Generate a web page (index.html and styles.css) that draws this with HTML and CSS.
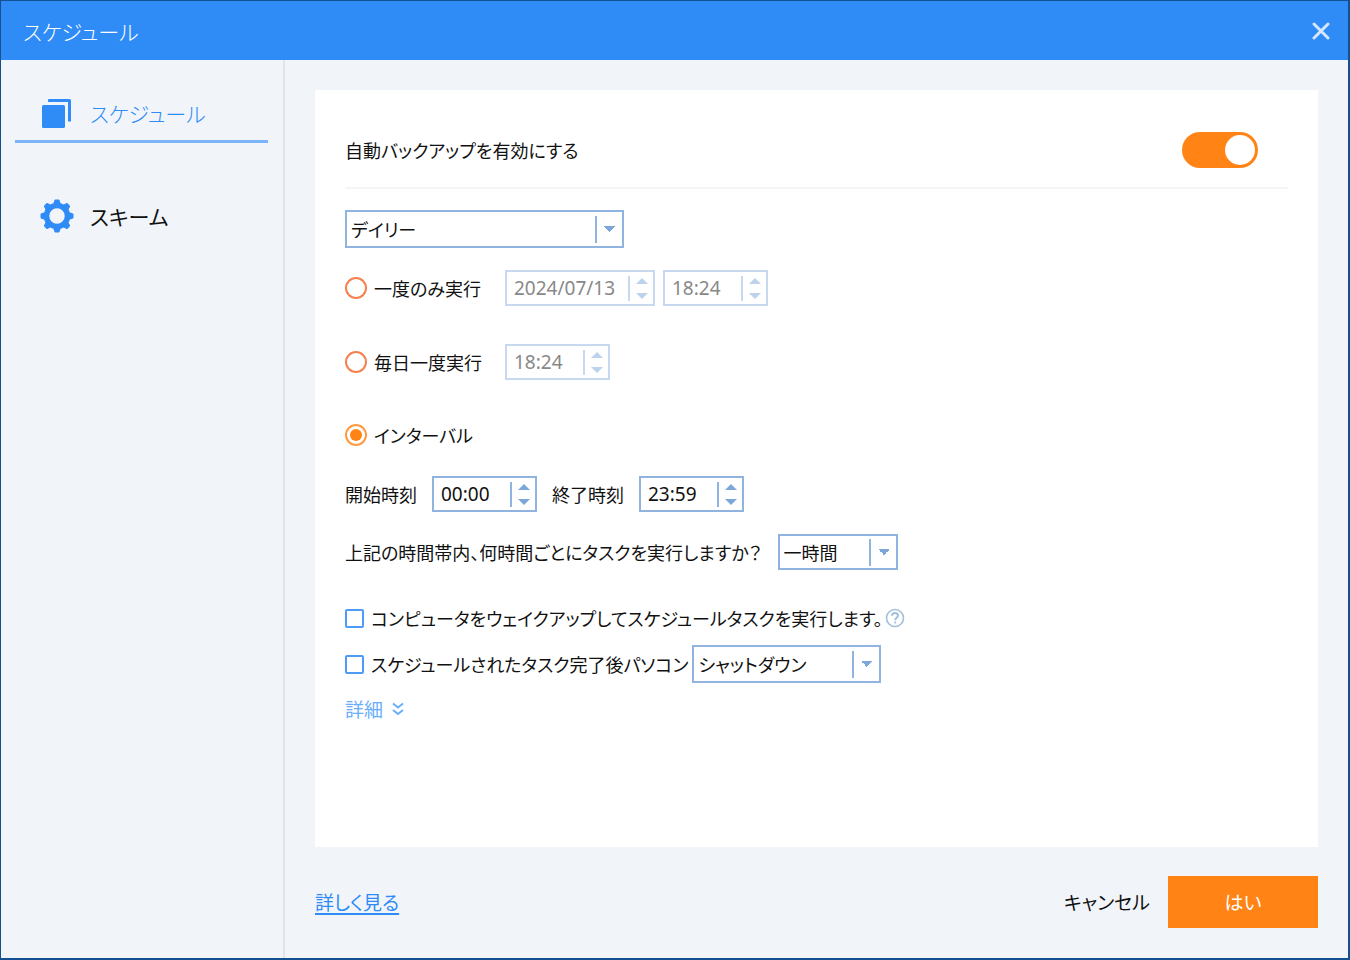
FILE: index.html
```html
<!DOCTYPE html>
<html lang="ja">
<head>
<meta charset="utf-8">
<title>スケジュール</title>
<link rel="stylesheet" href="styles.css">
</head>
<body>
<div class="window">
  <header class="titlebar">
    <h1 class="title">スケジュール</h1>
    <button class="close" type="button" aria-label="閉じる">
      <svg width="18" height="18" viewBox="0 0 18 18"><path d="M2 2L16 16M16 2L2 16" fill="none" stroke="#d5e7fd" stroke-width="3" stroke-linecap="round"/></svg>
    </button>
  </header>
  <div class="body">
    <nav class="sidebar">
      <a class="tab tab-active" href="#schedule">
        <svg class="tab-icon" width="34" height="34" viewBox="0 0 34 34" fill="#2f8bf6"><rect x="2" y="9" width="23" height="23" rx="1.5"/><path d="M9 3H29.500Q31 3 31 4.500V25.500H28V6H8V4Q8 3 9 3Z"/></svg>
        <span>スケジュール</span>
      </a>
      <a class="tab" href="#scheme">
        <svg class="tab-icon" width="34" height="34" viewBox="0 0 34 34" fill="#2f8bf6"><circle cx="17" cy="17" r="10.500" fill="none" stroke="#2f8bf6" stroke-width="5.500"/><path id="cog" d="M13 6L14.300 1.500Q14.600 .5 15.500 .5H18.500Q19.400 .5 19.700 1.500L21 6Z"/><use href="#cog" transform="rotate(45 17 17)"/><use href="#cog" transform="rotate(90 17 17)"/><use href="#cog" transform="rotate(135 17 17)"/><use href="#cog" transform="rotate(180 17 17)"/><use href="#cog" transform="rotate(225 17 17)"/><use href="#cog" transform="rotate(270 17 17)"/><use href="#cog" transform="rotate(315 17 17)"/></svg>
        <span>スキーム</span>
      </a>
    </nav>
    <main class="main">
      <form class="card" id="schedule-form">
        <div class="enable">
          <label for="enable">自動バックアップを有効にする</label>
          <input class="switch" type="checkbox" role="switch" id="enable" checked>
        </div>
        <select class="combo combo-period" aria-label="頻度"><option>デイリー</option><option>ウィークリー</option></select>

        <div class="row row-once">
          <label class="option option-wide"><input class="radio" type="radio" name="mode">一度のみ実行</label>
          <div class="spin spin-date spin-off">
            <input class="spin-text" type="text" value="2024/07/13" aria-label="実行日" disabled>
            <div class="spin-buttons"><button class="up" type="button" aria-label="増やす" disabled></button><button class="down" type="button" aria-label="減らす" disabled></button></div>
          </div>
          <div class="spin spin-off">
            <input class="spin-text" type="text" value="18:24" aria-label="実行時刻" disabled>
            <div class="spin-buttons"><button class="up" type="button" aria-label="増やす" disabled></button><button class="down" type="button" aria-label="減らす" disabled></button></div>
          </div>
        </div>

        <div class="row row-daily">
          <label class="option option-wide"><input class="radio" type="radio" name="mode">毎日一度実行</label>
          <div class="spin spin-off">
            <input class="spin-text" type="text" value="18:24" aria-label="毎日の実行時刻" disabled>
            <div class="spin-buttons"><button class="up" type="button" aria-label="増やす" disabled></button><button class="down" type="button" aria-label="減らす" disabled></button></div>
          </div>
        </div>

        <div class="row row-interval">
          <label class="option"><input class="radio" type="radio" name="mode" checked>インターバル</label>
        </div>

        <div class="row row-times">
          <label class="time-label" for="start">開始時刻</label>
          <div class="spin">
            <input class="spin-text" type="text" id="start" value="00:00">
            <div class="spin-buttons"><button class="up" type="button" aria-label="増やす"></button><button class="down" type="button" aria-label="減らす"></button></div>
          </div>
          <label class="time-label" for="end">終了時刻</label>
          <div class="spin">
            <input class="spin-text" type="text" id="end" value="23:59">
            <div class="spin-buttons"><button class="up" type="button" aria-label="増やす"></button><button class="down" type="button" aria-label="減らす"></button></div>
          </div>
        </div>

        <div class="row row-every">
          <label for="every">上記の時間帯内、何時間ごとにタスクを実行しますか？</label>
          <select class="combo combo-every" id="every"><option>一時間</option><option>二時間</option></select>
        </div>

        <div class="row row-wake">
          <label class="option"><input class="check" type="checkbox">コンピュータをウェイクアップしてスケジュールタスクを実行します。</label>
          <button class="help" type="button" aria-label="ヘルプ">
            <svg width="20" height="20" viewBox="0 0 20 20" fill="none" stroke="#a3bedb"><circle cx="10" cy="10" r="8.500" stroke-width="1.600"/><path d="M7 7.800Q7 5 10 5T13 7.600Q13 8.800 11.500 9.800Q10.200 10.700 10.200 12.200" stroke-width="2"/><path d="M10.200 13.600V15.400" stroke-width="2"/></svg>
          </button>
        </div>

        <div class="row row-after">
          <label class="option"><input class="check" type="checkbox">スケジュールされたタスク完了後パソコン</label>
          <select class="combo combo-after" aria-label="完了後の動作"><option>シャットダウン</option><option>スリープ</option></select>
        </div>

        <a class="more" href="#details">詳細
          <svg width="12" height="14" viewBox="0 0 12 14"><path d="M1 1.500L6 5.500L11 1.500M1 8L6 12L11 8" fill="none" stroke="#6aadfb" stroke-width="2"/></svg>
        </a>
      </form>
      <footer class="footer">
        <a class="learn" href="#learn">詳しく見る</a>
        <button class="cancel" type="button">キャンセル</button>
        <button class="ok" type="submit" form="schedule-form">はい</button>
      </footer>
    </main>
  </div>
</div>
</body>
</html>
```
FILE: styles.css
```css
* { box-sizing: border-box; }

body {
  margin: 0;
  color: #111;
  font: 400 18px/20px "Noto Sans CJK JP", sans-serif;
  font-feature-settings: "palt";
}

button, input, select {
  margin: 0;
  padding: 0;
  border: 0;
  background: none;
  color: inherit;
  font: inherit;
  font-feature-settings: inherit;
}

svg { display: block; }

.window {
  display: flex;
  flex-direction: column;
  min-height: 100vh;
  border: 2px solid #14508f;
  border-width: 1px 2px 2px 1px;
  background: #f1f5fa;
}

/* Title bar */
.titlebar {
  display: flex;
  align-items: center;
  justify-content: space-between;
  height: 59px;
  padding: 0 18px 0 22px;
  background: #2f8bf6;
  color: #fff;
}
.title { margin: 0; font-size: 21px; font-weight: 300; }
.close { display: flex; }

.body { display: flex; flex: 1; }

/* Sidebar */
.sidebar {
  display: flex;
  flex-direction: column;
  gap: 42px;
  flex: none;
  width: 284px;
  padding: 22px 15px 0 14px;
  border-right: 2px solid #dfe4ea;
}
.tab {
  display: flex;
  align-items: center;
  gap: 16px;
  height: 61px;
  padding-left: 25px;
  color: #111;
  font-size: 21px;
  text-decoration: none;
}
.tab-active {
  padding-top: 3px;
  border-bottom: 3px solid #7db4f9;
  color: #2f8bf6;
  font-weight: 300;
}
.tab-icon { flex: none; }

/* Main column */
.main {
  display: flex;
  flex-direction: column;
  gap: 29px;
  flex: 1;
  padding: 30px;
}
.card {
  flex: 1;
  padding: 42px 30px 30px;
  background: #fff;
}

.enable {
  display: flex;
  align-items: center;
  justify-content: space-between;
  padding: 0 30px 19px 0;
  margin-bottom: 21px;
  border-bottom: 2px solid #f5f5f6;
}
.switch {
  display: flex;
  align-items: center;
  appearance: none;
  width: 76px;
  height: 36px;
  padding: 3px;
  border-radius: 18px;
  background: #c4ccd6;
}
.switch:checked { justify-content: flex-end; background: #ff8415; }
.switch::before {
  content: "";
  width: 30px;
  height: 30px;
  border-radius: 50%;
  background: #fff;
}

.row { display: flex; align-items: center; }
.row-once { gap: 8px; margin-top: 22px; }
.row-daily { gap: 8px; margin-top: 38px; }
.row-interval { margin-top: 44px; }
.row-times { gap: 15px; margin-top: 30px; }
.row-every { gap: 16px; margin-top: 22px; }
.row-wake { gap: 2px; margin-top: 38px; }
.row-after { gap: 4px; margin-top: 17px; }

.option { display: flex; align-items: center; gap: 7px; }
.option-wide { width: 152px; }
.time-label { width: 72px; }

.radio {
  display: grid;
  place-items: center;
  appearance: none;
  flex: none;
  width: 22px;
  height: 22px;
  border: 2px solid #f5814f;
  border-radius: 50%;
}
.radio:checked { border-color: #ff9a40; }
.radio:checked::before {
  content: "";
  width: 12px;
  height: 12px;
  border-radius: 50%;
  background: #ff8415;
}
.check {
  appearance: none;
  flex: none;
  width: 19px;
  height: 19px;
  border: 2px solid #4d9cf8;
  border-radius: 2px;
}
.check:checked { background: #4d9cf8; }

/* Drop-downs: the divider and the two halves of the arrow are background layers */
.combo {
  display: block;
  appearance: none;
  height: 36px;
  padding: 0 32px 0 4px;
  border: 2px solid #91b3df;
  background-color: #fff;
  background-image:
    linear-gradient(#91b3df, #91b3df),
    linear-gradient(to top right, transparent 50%, #7da7d9 50%),
    linear-gradient(to top left, transparent 50%, #7da7d9 50%);
  background-repeat: no-repeat;
  background-position: right 25px center, right 12px center, right 6px center;
  background-size: 2px 27px, 6px 6px, 6px 6px;
}
.combo-period { width: 279px; height: 38px; }
.combo-every { width: 120px; }
.combo-after { width: 189px; height: 38px; }

/* Spin boxes */
.spin {
  display: flex;
  align-items: center;
  width: 105px;
  height: 36px;
  border: 2px solid #91b3df;
}
.spin-date { width: 150px; }
.spin-text {
  flex: 1;
  min-width: 0;
  padding-left: 7px;
  font: 19px/24px "Noto Sans", sans-serif;
}
.spin-buttons {
  display: flex;
  flex-direction: column;
  align-items: center;
  justify-content: space-between;
  width: 25px;
  height: 25px;
  padding: 2px 0;
  border-left: 2px solid #91b3df;
}
.up, .down {
  width: 0;
  height: 0;
  border: 6px solid transparent;
}
.up { border-top: 0; border-bottom-color: #7da7d9; }
.down { border-bottom: 0; border-top-color: #7da7d9; }
.spin-off, .spin-off .spin-buttons { border-color: #c8d9ef; }
.spin-off { color: #888; }
.spin-off .up { border-bottom-color: #bdd2ec; }
.spin-off .down { border-top-color: #bdd2ec; }

.help { display: flex; }

.more {
  display: flex;
  align-items: center;
  gap: 9px;
  width: max-content;
  margin-top: 16px;
  color: #6aadfb;
  font-size: 19px;
  text-decoration: none;
}

/* Footer */
.footer {
  display: flex;
  align-items: center;
  font-size: 19px;
}
.learn {
  margin-right: auto;
  color: #2f8bf6;
  text-decoration-thickness: 2px;
  text-underline-offset: 3px;
}
.cancel { margin-right: 18px; }
.ok {
  width: 150px;
  height: 52px;
  background: #ff8415;
  color: #fff;
}
```
